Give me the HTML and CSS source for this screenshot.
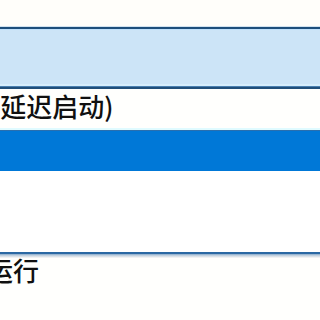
FILE: index.html
```html
<!DOCTYPE html>
<html lang="zh-CN">
<head>
<meta charset="utf-8">
<title>启动类型</title>
<link rel="stylesheet" href="styles.css">
</head>
<body>
<div class="list">
  <div class="gap-top"></div>
  <div class="item hover"><span class="label">自动</span></div>
  <div class="item plain"><span class="label shift-a">(延迟启动)</span></div>
  <div class="item selected"><span class="label">自动</span></div>
  <div class="item empty"></div>
  <div class="divider"></div>
  <div class="item status"><span class="label shift-b">正在运行</span></div>
</div>
</body>
</html>
```
FILE: styles.css
```css
html, body {
  margin: 0;
  padding: 0;
  background: #fffffd;
}
body {
  width: 320px;
  height: 320px;
  overflow: hidden;
  font-family: "Noto Sans CJK SC", "Noto Sans", sans-serif;
  font-size: 26px;
  font-weight: 500;
  color: #101010;
}
.list {
  display: flex;
  flex-direction: column;
}
.gap-top {
  height: 27px;
  border-bottom: 1px solid #d3e3ef;
  box-sizing: border-box;
  background: #fffefa;
}
.item {
  box-sizing: border-box;
  overflow: hidden;
  white-space: nowrap;
}
.label {
  display: block;
  line-height: 25px;
}
.hover {
  height: 62px;
  background: #cce4f7;
  border-top: 2px solid #1d4f7c;
  border-bottom: 2px solid #1f4e7a;
  box-shadow: inset 0 1px 0 #bfe0fa, inset 0 -1px 0 #4a7fb0, inset 0 -3px 0 #d6edfc;
}
.hover .label,
.selected .label {
  visibility: hidden;
}
.plain {
  height: 41px;
  padding-top: 4px;
  border-bottom: 2px solid #e0fbff;
}
.shift-a {
  margin-left: -9px;
}
.selected {
  height: 41px;
  background: #0078d7;
  border-top: 1px solid #2a6fae;
}
.empty {
  height: 81px;
  background: #ffffff;
}
.divider {
  height: 6px;
  background: linear-gradient(#2b68a3 0, #2b68a3 2px, #7fa3c6 2px, #b4c8da 3px, #e6e9ec 5px, #fbfbfb 6px);
}
.status {
  height: 60px;
}
.status .label {
  line-height: 24px;
}
.shift-b {
  margin-left: -65px;
}
```
